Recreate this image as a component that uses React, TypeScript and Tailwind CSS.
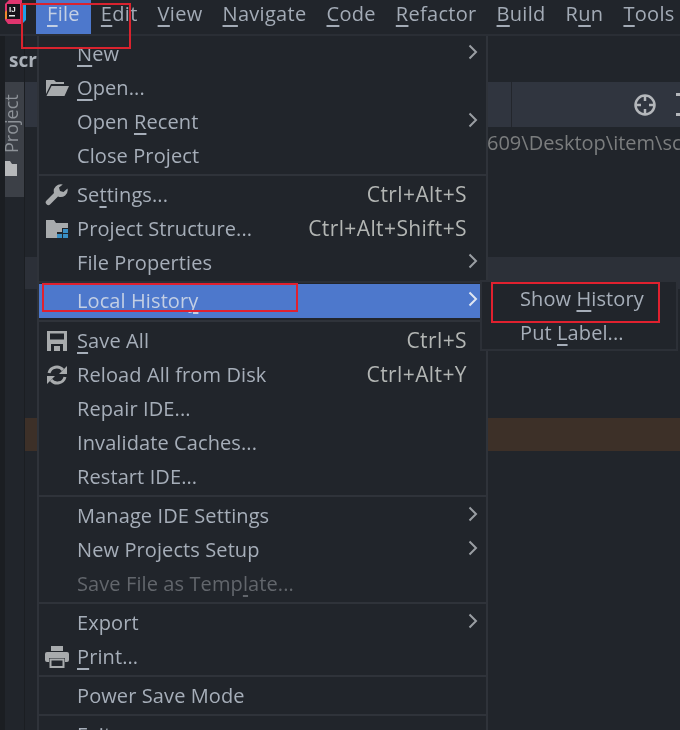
import { ReactNode } from "react";

type Item = {
  pre?: string;
  key_?: string;
  post?: string;
  shortcut?: string;
  arrow?: boolean;
  icon?: ReactNode;
  active?: boolean;
  disabled?: boolean;
};

function Label({ pre, key_, post }: { pre?: string; key_?: string; post?: string }) {
  return (
    <span>
      {pre}
      {key_ && <span className="underline underline-offset-[4px] decoration-[1.5px]">{key_}</span>}
      {post}
    </span>
  );
}

function Chevron({ light }: { light?: boolean }) {
  return (
    <svg width="10" height="16" viewBox="0 0 10 16" className="absolute left-[429px] top-[7px]">
      <path d="M1.5 1.5 L8 8 L1.5 14.5" fill="none" stroke={light ? "#dfe6f2" : "#9a9ea3"} strokeWidth="2" />
    </svg>
  );
}

const FolderIcon = (
  <svg width="24" height="20" viewBox="0 0 24 20">
    <path d="M1 2h8l2 2h8v2H6L1 16z" fill="#a8abad" />
    <path d="M6.5 8H24l-4.500 10H1.500z" fill="#a8abad" />
  </svg>
);
const WrenchIcon = (
  <svg width="24" height="22" viewBox="0 0 24 22">
    <path d="M22.500 4.500l-4 3.500-3.500-1-1-3.500 3.800-3a7 7 0 0 0-8.800 8.500L1.500 16.500a2.500 2.500 0 0 0 3.800 3.700l7.700-7.700a7 7 0 0 0 9.500-8z" fill="#a8abad" />
  </svg>
);
const StructureIcon = (
  <svg width="24" height="20" viewBox="0 0 24 20">
    <path d="M1 1h8l2 3h12v5h-6v4h-5v6H1z" fill="#a8abad" />
    <rect x="18" y="10" width="5" height="4" fill="#3a8fc4" />
    <rect x="12" y="15" width="5" height="4" fill="#3a8fc4" />
    <rect x="18" y="15" width="5" height="4" fill="#3a8fc4" />
  </svg>
);
const SaveIcon = (
  <svg width="22" height="20" viewBox="0 0 22 20">
    <path fillRule="evenodd" d="M1 0h20v20H1zM4 2.500v6h14v-6zM5 13v7h12v-7z" fill="#a8abad" />
    <rect x="8" y="15" width="6" height="5" fill="#a8abad" />
  </svg>
);
const ReloadIcon = (
  <svg width="22" height="20" viewBox="0 0 22 20">
    <path d="M3 8a8 8 0 0 1 14-3" fill="none" stroke="#a8abad" strokeWidth="3" />
    <path d="M21 1v8h-8z" fill="#a8abad" />
    <path d="M19 12a8 8 0 0 1-14 3" fill="none" stroke="#a8abad" strokeWidth="3" />
    <path d="M1 19v-8h8z" fill="#a8abad" />
  </svg>
);
const PrintIcon = (
  <svg width="24" height="22" viewBox="0 0 24 22">
    <rect x="6" y="0" width="12" height="5" fill="#a8abad" />
    <path d="M2 6h20a2 2 0 0 1 2 2v6a2 2 0 0 1-2 2h-2v-4H4v4H2a2 2 0 0 1-2-2V8a2 2 0 0 1 2-2z" fill="#a8abad" />
    <path d="M5.500 13.500h13V21h-13z" fill="none" stroke="#a8abad" strokeWidth="2" />
  </svg>
);

type Group = Item[];

const groups: Group[] = [
  [
    { key_: "N", post: "ew", arrow: true },
    { key_: "O", post: "pen...", icon: FolderIcon },
    { pre: "Open ", key_: "R", post: "ecent", arrow: true },
    { pre: "Close Project" },
  ],
  [
    { pre: "Se", key_: "t", post: "tings...", shortcut: "Ctrl+Alt+S", icon: WrenchIcon },
    { pre: "Project Structure...", shortcut: "Ctrl+Alt+Shift+S", icon: StructureIcon },
    { pre: "File Properties", arrow: true },
  ],
  [{ pre: "Local Histor", key_: "y", arrow: true, active: true }],
  [
    { key_: "S", post: "ave All", shortcut: "Ctrl+S", icon: SaveIcon },
    { pre: "Reload All from Disk", shortcut: "Ctrl+Alt+Y", icon: ReloadIcon },
    { pre: "Repair IDE..." },
    { pre: "Invalidate Caches..." },
    { pre: "Restart IDE..." },
  ],
  [
    { pre: "Manage IDE Settings", arrow: true },
    { pre: "New Projects Setup", arrow: true },
    { pre: "Save File as Temp", key_: "l", post: "ate...", disabled: true },
  ],
  [
    { pre: "Export", arrow: true },
    { key_: "P", post: "rint...", icon: PrintIcon },
  ],
  [{ pre: "Power Save Mode" }],
  [{ pre: "Exit" }],
];

const menuBar = [
  { key_: "F", post: "ile", active: true },
  { key_: "E", post: "dit" },
  { key_: "V", post: "iew" },
  { key_: "N", post: "avigate" },
  { key_: "C", post: "ode" },
  { key_: "R", post: "efactor" },
  { key_: "B", post: "uild" },
  { pre: "R", key_: "u", post: "n" },
  { key_: "T", post: "ools" },
];

function Row({ item }: { item: Item }) {
  const color = item.active ? "bg-[#4d78cc] text-[#c3cfe4]" : item.disabled ? "text-[#62666c]" : "text-[#a6aeb9]";
  return (
    <div className={`relative h-[34px] flex items-center pl-[38px] pr-[19px] tracking-[0.1px] ${color}`}>
      {item.icon && <div className="absolute left-[5px] top-0 h-full w-[26px] flex items-center justify-center">{item.icon}</div>}
      <Label pre={item.pre} key_={item.key_} post={item.post} />
      {item.shortcut && <span className="ml-auto text-[21px] tracking-[0.4px] text-[#b3b6b4]">{item.shortcut}</span>}
      {item.arrow && <Chevron light={item.active} />}
    </div>
  );
}

export default function App() {
  return (
    <div className="relative w-[680px] h-[730px] overflow-hidden bg-[#21252b] text-[20px] blur-[0.4px] font-['Open_Sans','Noto_Sans',sans-serif]">
      {/* menu bar */}
      <header className="h-[36px] flex border-b-2 border-[#2a2e35] pl-[36px] tracking-[0.3px] text-[#a3abb6]">
        {menuBar.map((m, i) => (
          <div
            key={i}
            className={`h-[34px] pb-[6px] flex items-center ${m.active ? "px-[11px] bg-[#4d78cc] text-[#c3cfe4]" : "px-[10px]"}`}
          >
            <Label pre={m.pre} key_={m.key_} post={m.post} />
          </div>
        ))}
      </header>
      <div className="absolute left-[5px] top-0">
        <svg width="22" height="24" viewBox="0 0 22 24">
          <path d="M0 4L4 0h13v24H3L0 20z" fill="#e0356f" />
          <path d="M0 12l2-2 3 9H0z" fill="#f08a2c" />
          <path d="M17 4h4v16l-3 3h-1z" fill="#1f9fe8" />
          <rect x="2" y="4" width="13" height="15" fill="#17131a" />
          <text x="4" y="12" fontSize="8" fontWeight="700" fill="#e8e8e8" fontFamily="Liberation Sans">IJ</text>
          <rect x="4" y="15" width="6" height="1.500" fill="#e8e8e8" />
        </svg>
      </div>

      {/* editor behind the menu */}
      <div className="flex h-[694px]">
        <aside className="w-[25px] shrink-0 flex flex-col border-l-[5px] border-r border-l-[#1b1e22] border-r-[#1b1e22]">
          <div className="h-[46px] pt-[10px] pl-[4px] w-[40px] font-bold text-[#aab0b8] text-[19px]">scr</div>
          <div className="h-[115px] bg-[#3c4047] overflow-hidden flex flex-col items-start pt-[11px] text-[#8d9298]">
            <span className="[writing-mode:vertical-rl] rotate-180 text-[18px] leading-[12px] h-[60px]">Project</span>
            <svg width="12" height="15" viewBox="0 0 12 15" className="mt-[8px]">
              <path d="M0 0h5l2 3h5v12H0z" fill="#b6b8ba" />
            </svg>
          </div>
        </aside>
        <main className="flex-1 flex flex-col">
          <div className="h-[46px]" />
          <div className="h-[45px] bg-[#30353f] flex items-center justify-end relative">
            <svg width="24" height="24" viewBox="0 0 24 24" className="mr-[19px]">
              <circle cx="12" cy="12" r="9.500" fill="none" stroke="#b4b7bb" strokeWidth="2.500" />
              <path d="M12 2v6M12 16v6M2 12h6M16 12h6" stroke="#b4b7bb" strokeWidth="2.500" />
            </svg>
            <div className="w-[6px] h-[23px] border-y-[3px] border-[#b4b7bb]" />
            <div className="absolute left-[486px] top-0 h-full w-px bg-[#23262c]" />
          </div>
          <div className="h-[130px] pt-[1px] pl-[462px] whitespace-nowrap text-[#7b7d7e]">609\Desktop\item\sc</div>
          <div className="h-[32px] bg-[#2c3038]" />
          <div className="h-[129px]" />
          <div className="h-[33px] bg-[#3d3028]" />
        </main>
      </div>

      {/* File menu */}
      <div className="absolute left-[37px] top-[36px] w-[451px] border-x-2 border-[#2f333a] bg-[#21252b] pt-px">
        {groups.map((group, i) => (
          <div key={i}>
            {group.map((item, j) => (
              <Row key={j} item={item} />
            ))}
            {i === 1 ? (
              <div className="h-[4px] pt-px"><div className="h-[2px] bg-[#2b2f36]" /></div>
            ) : i === 2 ? (
              <div className="h-[6px] pt-[2px]"><div className="h-[2px] bg-[#2f333a]" /></div>
            ) : i < groups.length - 1 ? (
              <div className="h-[5px] pt-px"><div className="h-[2px] bg-[#2f333a]" /></div>
            ) : null}
          </div>
        ))}
      </div>

      {/* Local History submenu */}
      <div className="absolute left-[480px] top-[280px] w-[198px] h-[71px] border-2 border-[#2c3037] bg-[#21252b] pl-[38px] tracking-[0.1px] text-[#a6aeb9]">
        <div className="h-[34px] flex items-center">
          <Label pre="Show " key_="H" post="istory" />
        </div>
        <div className="h-[34px] flex items-center">
          <Label pre="Put " key_="L" post="abel..." />
        </div>
      </div>

      {/* red annotation boxes */}
      <div className="absolute left-[21px] top-[3px] w-[110px] h-[46px] border-2 border-[#d9232e]" />
      <div className="absolute left-[42px] top-[283px] w-[256px] h-[29px] border-2 border-[#e0212f]" />
      <div className="absolute left-[491px] top-[282px] w-[169px] h-[41px] border-2 border-[#e0212f]" />
    </div>
  );
}
